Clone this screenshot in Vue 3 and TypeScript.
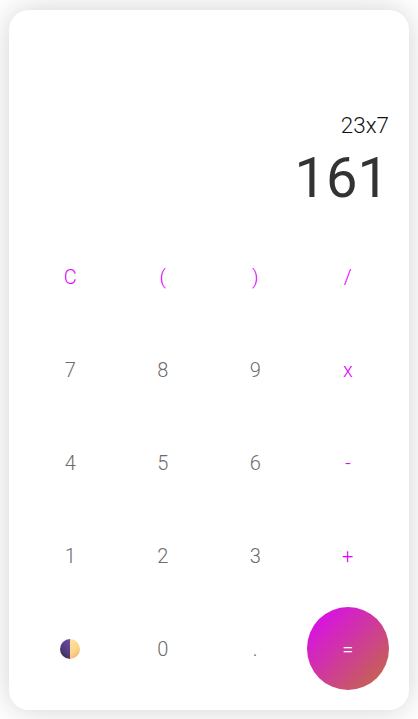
<script setup lang="ts">
interface Key { label: string; kind: 'op' | 'num' | 'eq' | 'theme' }
const ops = new Set(['C', '(', ')', '/', 'x', '-', '+'])
const labels = ['C', '(', ')', '/', '7', '8', '9', 'x', '4', '5', '6', '-', '1', '2', '3', '+']
const keys: Key[] = [
  ...labels.map((label): Key => ({ label, kind: ops.has(label) ? 'op' : 'num' })),
  { label: '', kind: 'theme' },
  { label: '0', kind: 'num' },
  { label: '.', kind: 'num' },
  { label: '=', kind: 'eq' },
]
</script>

<template>
  <div class="page">
    <main class="calc">
      <section class="display">
        <div class="expr">23x7</div>
        <div class="result">161</div>
      </section>
      <section class="keys">
        <button v-for="(k, i) in keys" :key="i" class="key" :class="k.kind" type="button">
          <svg v-if="k.kind === 'theme'" class="moon" viewBox="0 0 20 20" aria-hidden="true">
            <defs>
              <linearGradient id="moonDark" x1="0.7" y1="0.1" x2="0.2" y2="1">
                <stop offset="0" stop-color="#66489a" />
                <stop offset="0.6" stop-color="#4f3878" />
                <stop offset="1" stop-color="#26242f" />
              </linearGradient>
              <linearGradient id="moonLight" x1="0.3" y1="0" x2="0.7" y2="1">
                <stop offset="0" stop-color="#ffe09a" />
                <stop offset="0.55" stop-color="#fdd58a" />
                <stop offset="1" stop-color="#efb26a" />
              </linearGradient>
            </defs>
            <path d="M10 0a10 10 0 0 0 0 20z" fill="url(#moonDark)" />
            <path d="M10 0a10 10 0 0 1 0 20z" fill="url(#moonLight)" />
          </svg>
          <template v-else>{{ k.label }}</template>
        </button>
      </section>
    </main>
  </div>
</template>

<style>
html, body { margin: 0; background: #fff; }
</style>

<style scoped>
.page {
  width: 418px;
  height: 719px;
  box-sizing: border-box;
  padding: 10px 9px 9px;
  overflow: hidden;
  font-family: Roboto, sans-serif;
}
.calc {
  width: 400px;
  height: 700px;
  box-sizing: border-box;
  padding: 0 15px 15px;
  background: #fff;
  border-radius: 20px;
  box-shadow: 0 0 30px rgba(0, 0, 0, 0.18);
  display: flex;
  flex-direction: column;
  justify-content: flex-end;
}
.display {
  text-align: right;
  padding-right: 5px;
  color: #333;
  margin-bottom: 19px;
}
.expr {
  font-size: 22.4px;
  font-weight: 300;
  line-height: 26px;
  color: #111;
}
.result {
  font-size: 56px;
  font-weight: 400;
  line-height: 66px;
  margin-top: 7px;
}
.keys {
  display: grid;
  grid-template-columns: repeat(4, 92.5px);
  grid-auto-rows: 93px;
}
.key {
  border: 0;
  padding: 0;
  background: none;
  font-family: inherit;
  font-size: 20px;
  font-weight: 300;
  display: flex;
  align-items: center;
  justify-content: center;
  margin: 5px;
  border-radius: 50%;
}
.num { color: #6c6c6c; }
.op { color: #e100ff; }
.eq {
  color: #fff;
  background: linear-gradient(135deg, #d80fe8 10%, #c56450 90%);
}
.moon {
  width: 20px;
  height: 20px;
}
</style>
